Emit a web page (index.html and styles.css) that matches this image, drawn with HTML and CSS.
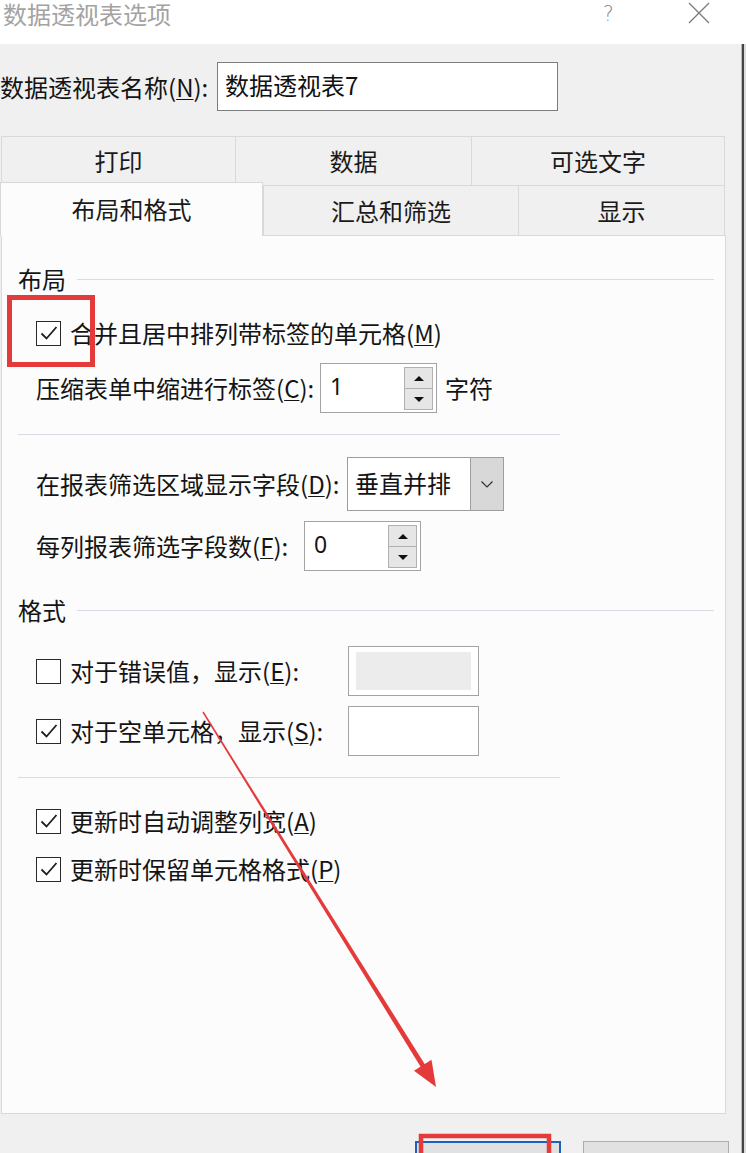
FILE: index.html
```html
<!DOCTYPE html>
<html lang="zh-CN">
<head>
<meta charset="utf-8">
<title>数据透视表选项</title>
<link rel="stylesheet" href="styles.css">
</head>
<body>
<div class="window">
  <div class="titlebar">
    <span class="title">数据透视表选项</span>
    <span class="help">?</span>
    <svg class="close" width="22" height="22" viewBox="0 0 22 22"><path d="M1 1L21 21M21 1L1 21" stroke="#7a7a7a" stroke-width="1.3" fill="none"/></svg>
  </div>
  <div class="body-wrap">
    <div class="main">
      <div class="name-row">
        <span class="name-label">数据透视表名称(<u>N</u>):</span>
        <div class="name-box">数据透视表7</div>
      </div>
      <div class="tabs">
        <div class="tab-row row1">
          <div class="tab w-print">打印</div>
          <div class="tab w-data">数据</div>
          <div class="tab w-alt last">可选文字</div>
        </div>
        <div class="tab-row row2">
          <div class="tab active">布局和格式</div>
          <div class="tab w-sum">汇总和筛选</div>
          <div class="tab w-show last">显示</div>
        </div>
      </div>
      <div class="panel">
        <div class="sec-head first"><span>布局</span><div class="rule"></div></div>
        <div class="check-row r-merge">
          <span class="cb"><svg viewBox="0 0 22 22" width="22" height="22"><path d="M3.5 11.5L8.5 16.5L18.5 5" stroke="#1e1e1e" stroke-width="1.8" fill="none"/></svg></span>
          <span>合并且居中排列带标签的单元格(<u>M</u>)</span>
        </div>
        <div class="field-row r-indent">
          <span class="lbl l-indent">压缩表单中缩进行标签(<u>C</u>):</span>
          <div class="spin">
            <span class="val">1</span>
            <div class="spin-btns"><span class="sb"><i class="up"></i></span><span class="sb"><i class="down"></i></span></div>
          </div>
          <span class="unit">字符</span>
        </div>
        <div class="sep s1"></div>
        <div class="field-row r-drop">
          <span class="lbl l-drop">在报表筛选区域显示字段(<u>D</u>):</span>
          <div class="drop">
            <span class="val">垂直并排</span>
            <span class="drop-btn"><svg width="14" height="10" viewBox="0 0 14 10"><path d="M1.5 2.5L7 8L12.5 2.5" stroke="#333" stroke-width="1.2" fill="none"/></svg></span>
          </div>
        </div>
        <div class="field-row r-count">
          <span class="lbl l-count">每列报表筛选字段数(<u>F</u>):</span>
          <div class="spin">
            <span class="val">0</span>
            <div class="spin-btns"><span class="sb"><i class="up"></i></span><span class="sb"><i class="down"></i></span></div>
          </div>
        </div>
        <div class="sec-head second"><span>格式</span><div class="rule"></div></div>
        <div class="box-row r-err">
          <div class="box-label"><span class="cb"></span><span>对于错误值，显示(<u>E</u>):</span></div>
          <div class="tbox"><div class="tbox-fill"></div></div>
        </div>
        <div class="box-row r-empty">
          <div class="box-label"><span class="cb"><svg viewBox="0 0 22 22" width="22" height="22"><path d="M3.5 11.5L8.5 16.5L18.5 5" stroke="#1e1e1e" stroke-width="1.8" fill="none"/></svg></span><span>对于空单元格，显示(<u>S</u>):</span></div>
          <div class="tbox"></div>
        </div>
        <div class="sep s2"></div>
        <div class="check-row r-auto">
          <span class="cb"><svg viewBox="0 0 22 22" width="22" height="22"><path d="M3.5 11.5L8.5 16.5L18.5 5" stroke="#1e1e1e" stroke-width="1.8" fill="none"/></svg></span>
          <span>更新时自动调整列宽(<u>A</u>)</span>
        </div>
        <div class="check-row r-keep">
          <span class="cb"><svg viewBox="0 0 22 22" width="22" height="22"><path d="M3.5 11.5L8.5 16.5L18.5 5" stroke="#1e1e1e" stroke-width="1.8" fill="none"/></svg></span>
          <span>更新时保留单元格格式(<u>P</u>)</span>
        </div>
      </div>
      <div class="buttons">
        <div class="btn primary"></div>
        <div class="btn"></div>
      </div>
    </div>
    <div class="edge"></div>
  </div>
  <svg class="annot" width="746" height="1153" viewBox="0 0 746 1153">
    <rect x="9.5" y="297.5" width="83" height="67" fill="none" stroke="#e53a3a" stroke-width="5"/>
    <rect x="421" y="1136" width="128" height="40" fill="none" stroke="#e53a3a" stroke-width="4.5"/>
    <polygon points="203.6,711.6 202.4,712.4 420.9,1067.3 425.1,1064.7" fill="#e53a3a"/>
    <polygon points="431.5,1059.7 414,1070.8 436,1087" fill="#e53a3a"/>
  </svg>
</div>
</body>
</html>
```
FILE: styles.css
```css
* { box-sizing: border-box; }
html, body { margin: 0; padding: 0; }
body {
  width: 746px;
  height: 1153px;
  overflow: hidden;
  background: #f0f0f0;
  font-family: "Noto Sans CJK SC", "Microsoft YaHei", sans-serif;
  font-size: 24px;
  line-height: 30px;
  color: #141414;
}
u { text-decoration-thickness: 1px; text-underline-offset: 2px; }

.window { position: relative; width: 746px; height: 1153px; overflow: hidden; }

.titlebar {
  height: 44px;
  background: #ffffff;
  display: flex;
  align-items: flex-start;
  padding-top: 1px;
}
.title { margin-left: 3px; line-height: 26px; color: #a3a3a3; }
.help {
  margin-left: auto;
  font-family: "DejaVu Sans", sans-serif;
  font-weight: 200;
  font-size: 21px;
  line-height: 26px;
  color: #8c8c8c;
}
.close { margin: 1px 36px 0 74px; }

.body-wrap { display: flex; height: 1109px; }
.main { width: 741px; flex: 0 0 741px; }
.edge {
  flex: 1;
  background: linear-gradient(to right, #b8b8b8 0 1px, #454545 1px 3px, #dcdcdc 3px);
}

.name-row { display: flex; align-items: center; height: 49px; margin-top: 18px; }
.name-label { width: 217px; white-space: nowrap; }
.name-box {
  width: 341px;
  height: 49px;
  border: 1px solid #7d7d7d;
  background: #ffffff;
  padding: 7px 0 0 7px;
  line-height: 30px;
  color: #111;
}

.tabs { margin-top: 25px; }
.tab-row { display: flex; height: 50px; }
.row1 { margin-left: 1px; height: 49px; }
.tab {
  display: flex;
  align-items: center;
  justify-content: center;
  background: #f0f0f0;
  border-top: 1px solid #d9d9d9;
  border-left: 1px solid #d9d9d9;
  color: #1a1a1a;
}
.tab.last { border-right: 1px solid #d9d9d9; }
.w-print { width: 234px; }
.w-data { width: 236px; }
.w-alt { width: 254px; }
.w-sum { width: 255px; }
.w-show { width: 207px; }
.tab.active {
  position: relative;
  z-index: 2;
  width: 263px;
  height: 54px;
  margin-top: -3px;
  background: #fcfcfd;
  border-right: 1px solid #d9d9d9;
  padding-bottom: 2px;
}

.panel {
  margin-left: 1px;
  width: 725px;
  height: 879px;
  border: 1px solid #d9d9d9;
  background: #fcfcfd;
}

.sec-head {
  display: flex;
  align-items: center;
  height: 26px;
  padding-left: 16px;
  padding-right: 11px;
  line-height: 26px;
}
.sec-head .rule { flex: 1; height: 1px; background: #d7dce3; margin-left: 11px; }
.sec-head.first { margin-top: 30px; }
.sec-head.second { margin-top: 26px; }

.check-row { display: flex; align-items: center; height: 36px; padding-left: 34px; }
.r-merge { margin-top: 23px; }
.r-auto { margin-top: 25px; }
.r-keep { margin-top: 12px; }

.cb {
  flex: 0 0 25px;
  width: 25px;
  height: 25px;
  border: 1.5px solid #2a2a2a;
  margin-right: 9px;
  display: flex;
  align-items: center;
  justify-content: center;
  background: #fff;
}

.field-row { display: flex; align-items: center; padding-left: 34px; }
.lbl { white-space: nowrap; }
.l-indent { width: 284px; }
.l-drop { width: 311px; }
.l-count { width: 268px; }
.r-indent { margin-top: 12px; }
.r-drop { margin-top: 22px; }
.r-count { margin-top: 10px; }

.spin {
  width: 117px;
  height: 50px;
  border: 1px solid #a3a3a3;
  background: #ffffff;
  display: flex;
  align-items: flex-start;
}
.spin .val { padding: 7px 0 0 9px; line-height: 30px; font-family: "Noto Sans", sans-serif; font-size: 23px; }
.spin-btns {
  margin: 3px 3px 0 auto;
  width: 29px;
  height: 43px;
  display: flex;
  flex-direction: column;
}
.sb {
  flex: 1;
  border: 1px solid #b1b1b1;
  background: #e6e6e6;
  display: flex;
  align-items: center;
  justify-content: center;
}
.sb + .sb { border-top: none; }
.up, .down { width: 0; height: 0; border-left: 5px solid transparent; border-right: 5px solid transparent; }
.up { border-bottom: 5px solid #111; }
.down { border-top: 5px solid #111; }
.unit { margin-left: 8px; }

.sep { height: 1px; background: #d7dce3; margin-left: 16px; width: 542px; }
.s1 { margin-top: 21px; }
.s2 { margin-top: 21px; }

.drop {
  width: 157px;
  height: 54px;
  border: 1px solid #9d9d9d;
  background: #ffffff;
  display: flex;
}
.drop .val { flex: 1; padding: 10px 0 0 7px; line-height: 30px; }
.drop-btn {
  width: 33px;
  background: #d8d8d8;
  border-left: 1px solid #9d9d9d;
  display: flex;
  align-items: center;
  justify-content: center;
}

.box-row { display: flex; align-items: center; padding-left: 34px; height: 50px; }
.r-err { margin-top: 23px; }
.r-empty { margin-top: 10px; }
.box-label { width: 312px; display: flex; align-items: center; white-space: nowrap; }
.tbox {
  width: 131px;
  height: 50px;
  border: 1px solid #a3a3a3;
  background: #ffffff;
  padding: 5px 7px;
}
.tbox-fill { width: 100%; height: 100%; background: #ececec; }

.buttons { display: flex; gap: 22px; margin-top: 27px; padding-left: 415px; }
.btn {
  width: 146px;
  height: 44px;
  border: 1px solid #adadad;
  background: #e1e1e1;
}
.btn.primary { border: 2px solid #1b62c0; }

.annot { position: absolute; left: 0; top: 0; pointer-events: none; }
```
